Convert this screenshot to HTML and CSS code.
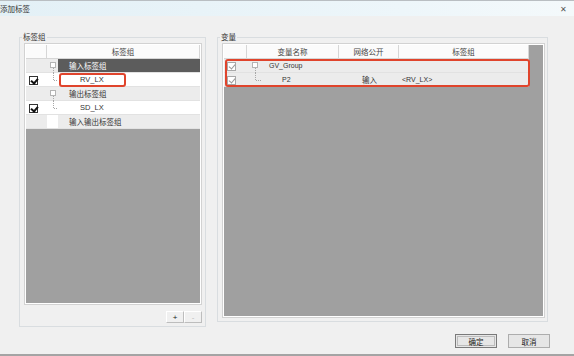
FILE: index.html
```html
<!DOCTYPE html>
<html lang="zh-CN">
<head>
    <meta charset="UTF-8">
    <title>添加标签</title>
    <link rel="stylesheet" href="styles.css">
</head>
<body>
    <div class="window">
        <div class="titlebar">
            <span class="title">添加标签</span>
            <span class="close">✕</span>
        </div>

        <div class="content">
            <div class="panels">
                <!-- Tag groups -->
                <fieldset class="group group-left">
                    <legend>标签组</legend>
                    <div class="grid grid-left">
                        <div class="row head">
                            <div class="c"></div>
                            <div class="c span">标签组</div>
                        </div>
                        <div class="row">
                            <div class="c shade"></div>
                            <div class="c shade tree"><span class="node"></span><span class="line down"></span></div>
                            <div class="c dark label">输入标签组</div>
                        </div>
                        <div class="row">
                            <div class="c"><span class="chk"></span></div>
                            <div class="c tree"><span class="line up"></span><span class="line across"></span></div>
                            <div class="c leaf">RV_LX<span class="mark mark-left"></span></div>
                        </div>
                        <div class="row">
                            <div class="c shade"></div>
                            <div class="c shade tree"><span class="node"></span><span class="line down"></span></div>
                            <div class="c shade label">输出标签组</div>
                        </div>
                        <div class="row">
                            <div class="c"><span class="chk"></span></div>
                            <div class="c tree"><span class="line up"></span><span class="line across"></span></div>
                            <div class="c leaf">SD_LX</div>
                        </div>
                        <div class="row">
                            <div class="c shade"></div>
                            <div class="c"></div>
                            <div class="c shade label">输入输出标签组</div>
                        </div>
                    </div>
                    <div class="plusminus">
                        <button class="tiny">+</button><button class="tiny">-</button>
                    </div>
                </fieldset>

                <!-- Variables -->
                <fieldset class="group group-right">
                    <legend>变量</legend>
                    <div class="grid grid-right">
                        <div class="row head">
                            <div class="c"></div>
                            <div class="c">变量名称</div>
                            <div class="c">网络公开</div>
                            <div class="c">标签组</div>
                        </div>
                        <div class="row">
                            <div class="c shade"><span class="chk off"></span></div>
                            <div class="c shade var tree-in"><span class="node"></span><span class="line down"></span>GV_Group</div>
                            <div class="c shade"></div>
                            <div class="c shade"></div>
                            <span class="mark mark-right"></span>
                        </div>
                        <div class="row">
                            <div class="c shade"><span class="chk off"></span></div>
                            <div class="c shade var child tree-in"><span class="line up"></span><span class="line across"></span>P2</div>
                            <div class="c shade right">输入</div>
                            <div class="c shade tag">&lt;RV_LX&gt;</div>
                        </div>
                    </div>
                </fieldset>
            </div>

            <div class="actions">
                <button class="btn default">确定</button>
                <button class="btn">取消</button>
            </div>
        </div>
    </div>
</body>
</html>
```

FILE: styles.css
```css
* {
    margin: 0;
    padding: 0;
    box-sizing: border-box;
}

body {
    font-family: "Noto Sans CJK SC", "Liberation Sans", sans-serif;
    font-size: 7.5px;
    color: #333;
    background: #f0f0f0;
}

.window {
    width: 574px;
    height: 356px;
    display: flex;
    flex-direction: column;
    border-bottom: 2px solid #a4a4a4;
}

/* Title bar */
.titlebar {
    height: 16px;
    display: flex;
    align-items: center;
    justify-content: space-between;
    border-top: 1px solid #b9bec2;
    background: linear-gradient(to right, #e3f0f6, #edf6fa 70%, #f4f9fb);
}

.title {
    margin-left: 0;
    font-size: 7.5px;
    line-height: 12px;
}

.close {
    margin-right: 7px;
    font-size: 8px;
    color: #555;
}

.content {
    flex: 1;
    display: flex;
    flex-direction: column;
    padding: 15px 0 0 19px;
}

.panels {
    display: flex;
    gap: 11px;
    align-items: flex-start;
}

/* Group boxes */
.group {
    border: 1px solid #d9dde0;
    min-width: 0;
}

.group legend {
    margin-left: -2px;
    padding: 0 1px;
    font-size: 7.5px;
    line-height: 12px;
    color: #333;
}

.group-left {
    width: 187px;
    padding: 0 3px 3px 4px;
}

.group-right {
    width: 331px;
    padding: 0 2px 3px 4px;
}

/* Grids */
.grid {
    background: #a0a0a0;
    border: 1px solid #d2d2d2;
    box-shadow: inset 0 0 0 1px #fff;
    padding: 1px;
}

.grid-left {
    height: 262px;
}

.grid-right {
    height: 275px;
}

.row {
    display: grid;
    height: 14px;
    position: relative;
}

.grid-left .row {
    grid-template-columns: 21px 11px 1fr;
}

.grid-right .row {
    grid-template-columns: 23px 92px 60px 130px;
}

.c {
    background: #fff;
    border-bottom: 1px solid #e2e2e2;
    line-height: 13px;
    position: relative;
    white-space: nowrap;
}

.head .c {
    background: #fbfbfb;
    border-right: 1px solid #d6d6d6;
    border-bottom: 1px solid #d6d6d6;
    text-align: center;
    color: #444;
}

.head .span {
    grid-column: 2 / 4;
}

.shade {
    background: #ececec;
}

.dark {
    background: #5c5c5c;
    color: #fff;
}

.label {
    padding-left: 11px;
}

.leaf {
    padding-left: 22px;
    font-family: "Liberation Sans", sans-serif;
    font-size: 7.5px;
}

.var {
    font-family: "Liberation Sans", sans-serif;
    font-size: 7px;
    padding-left: 22px;
}

.var.child {
    padding-left: 35px;
}

.right {
    text-align: right;
    padding-right: 22px;
}

.tag {
    font-family: "Liberation Sans", sans-serif;
    font-size: 7px;
    padding-left: 3px;
}

/* Checkboxes */
.chk {
    position: absolute;
    left: 3px;
    top: 3px;
    width: 9px;
    height: 9px;
    border: 1px solid #333;
    background: #fff;
}

.chk::after {
    content: "";
    position: absolute;
    left: 2px;
    top: 0;
    width: 3px;
    height: 5px;
    border: solid #111;
    border-width: 0 2px 2px 0;
    transform: rotate(40deg);
}

.chk.off {
    border-color: #a8a8a8;
}

.chk.off::after {
    border-color: #9a9a9a;
    border-width: 0 1px 1px 0;
}

/* Tree lines */
.node {
    position: absolute;
    left: 3px;
    top: 3px;
    width: 6px;
    height: 6px;
    border: 1px solid #b4b4b4;
    background: #fff;
}

.tree-in .node {
    left: 5px;
}

.line {
    position: absolute;
}

.line.down {
    left: 6px;
    top: 9px;
    height: 5px;
    border-left: 1px dotted #a8a8a8;
}

.line.up {
    left: 6px;
    top: 0;
    height: 7px;
    border-left: 1px dotted #a8a8a8;
}

.line.across {
    left: 7px;
    top: 7px;
    width: 5px;
    border-top: 1px dotted #a8a8a8;
}

.tree-in .line.down,
.tree-in .line.up {
    left: 8px;
}

.tree-in .line.across {
    left: 9px;
}

/* Red highlight boxes */
.mark {
    position: absolute;
    border: 2px solid #e0442c;
    border-radius: 3px;
    pointer-events: none;
}

.mark-left {
    left: 1px;
    top: 0;
    width: 67px;
    height: 14px;
}

.mark-right {
    left: 1px;
    top: 0;
    width: 305px;
    height: 28px;
    z-index: 2;
}

/* Buttons */
.plusminus {
    display: flex;
    justify-content: flex-end;
    margin-top: 6px;
}

.tiny {
    width: 18px;
    height: 12px;
    font-size: 8px;
    line-height: 9px;
    background: #f0f0f0;
    border: 1px solid #bdbdbd;
    border-top-color: #fff;
    border-left-color: #fff;
    color: #222;
    font-family: "Liberation Sans", sans-serif;
}

.tiny + .tiny {
    color: #bbb;
}

.actions {
    display: flex;
    justify-content: flex-end;
    gap: 11px;
    padding-right: 24px;
    margin-top: 7px;
}

.btn {
    width: 42px;
    height: 14px;
    font-family: "Noto Sans CJK SC", sans-serif;
    font-size: 7.5px;
    line-height: 11px;
    background: #e6e6e6;
    border: 1px solid #adadad;
    color: #222;
}

.btn.default {
    border: 1px solid #7a7a7a;
    box-shadow: inset 0 0 0 1px #e6e6e6, inset 0 0 0 2px #bcbcbc;
}
```
